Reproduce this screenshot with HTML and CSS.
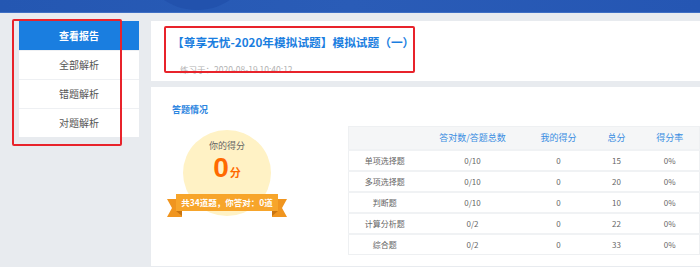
FILE: index.html
```html
<!DOCTYPE html>
<html lang="zh-CN">
<head>
<meta charset="utf-8">
<title>答题报告</title>
<link rel="stylesheet" href="styles.css">
</head>
<body>
<div class="banner"><div class="banner-deco"></div></div>
<div class="main">
  <nav class="side">
    <div class="side-item active">查看报告</div>
    <div class="side-item">全部解析</div>
    <div class="side-item">错题解析</div>
    <div class="side-item">对题解析</div>
  </nav>
  <div class="content">
    <section class="title-card">
      <h1 class="title">【尊享无忧-2020年模拟试题】模拟试题（一）</h1>
      <div class="subtitle">练习于：2020-08-19 10:40:12</div>
    </section>
    <section class="report-card">
      <h2 class="section-title">答题情况</h2>
      <div class="report-body">
        <div class="score-area">
          <div class="score-circle">
            <div class="score-label">你的得分</div>
            <div class="score-value"><span class="score-num">0</span><span class="score-unit">分</span></div>
          </div>
          <div class="ribbon">
            <svg class="ribbon-svg" width="120" height="24" viewBox="0 0 120 24">
              <polygon points="0,5 15,5 15,23 0,23 5,14" fill="#f0951f"/>
              <polygon points="120,5 105,5 105,23 120,23 115,14" fill="#f0951f"/>
              <polygon points="9,17 15,17 15,22" fill="#c87410"/>
              <polygon points="111,17 105,17 105,22" fill="#c87410"/>
              <rect x="9" y="0" width="102" height="17" fill="#f7a52b"/>
            </svg>
            <span class="ribbon-text">共34道题，你答对：0道</span>
          </div>
        </div>
        <table class="score-table">
          <colgroup>
            <col class="c1"><col class="c2"><col class="c3"><col class="c4"><col class="c5">
          </colgroup>
          <thead>
            <tr><th></th><th>答对数/答题总数</th><th>我的得分</th><th>总分</th><th>得分率</th></tr>
          </thead>
          <tbody>
            <tr><td>单项选择题</td><td>0/10</td><td>0</td><td>15</td><td>0%</td></tr>
            <tr><td>多项选择题</td><td>0/10</td><td>0</td><td>20</td><td>0%</td></tr>
            <tr><td>判断题</td><td>0/10</td><td>0</td><td>10</td><td>0%</td></tr>
            <tr><td>计算分析题</td><td>0/2</td><td>0</td><td>22</td><td>0%</td></tr>
            <tr><td>综合题</td><td>0/2</td><td>0</td><td>33</td><td>0%</td></tr>
          </tbody>
        </table>
      </div>
    </section>
  </div>
</div>
<div class="mark mark-side"></div>
<div class="mark mark-title"></div>
</body>
</html>
```

FILE: styles.css
```css
* { box-sizing: border-box; }
html, body { margin: 0; padding: 0; }
body {
  width: 700px;
  height: 267px;
  overflow: hidden;
  background: #e8ebef;
  font-family: "Noto Sans CJK SC", "Noto Sans", "Liberation Sans", sans-serif;
  position: relative;
}
.banner {
  height: 13px;
  background: linear-gradient(90deg, #2457b2 0%, #2a5cb7 50%, #2556b3 100%);
  border-bottom: 1px solid #3f6fc4;
  position: relative;
  overflow: hidden;
}
.banner-deco {
  position: absolute;
  left: 142px;
  top: -90px;
  width: 110px;
  height: 100px;
  border-radius: 50%;
  background: #2252ad;
}
.main {
  display: flex;
  padding: 8px 0 0 19px;
  gap: 12px;
}
.side {
  width: 121px;
  background: #fff;
  align-self: flex-start;
  display: flex;
  flex-direction: column;
}
.side-item {
  height: 29px;
  line-height: 28px;
  text-align: center;
  font-size: 10px;
  color: #555;
  border-top: 1px solid #eef0f3;
}
.side-item.active {
  border-top: 0;
  line-height: 29px;
  background: #1a7ee0;
  color: #fff;
  font-weight: bold;
}
.content {
  flex: 1;
  display: flex;
  flex-direction: column;
  gap: 6px;
}
.title-card {
  height: 60px;
  background: #fff;
  padding: 13px 0 0 21px;
  position: relative;
}
.title-card::before {
  content: "";
  position: absolute;
  left: 13px;
  top: 14px;
  width: 2px;
  height: 10px;
  background: #1a7ee0;
}
.title {
  margin: 0;
  font-size: 11.7px;
  line-height: 16px;
  font-weight: bold;
  color: #1a7ee0;
}
.subtitle {
  margin-top: 13px;
  padding-left: 8px;
  font-size: 8.5px;
  line-height: 12px;
  color: #b3b3b3;
}
.report-card {
  height: 179px;
  background: #fff;
  padding: 16px 0 0 21px;
}
.section-title {
  margin: 0;
  font-size: 9px;
  line-height: 14px;
  font-weight: bold;
  color: #2a84e0;
}
.report-body {
  display: flex;
  margin-top: 9px;
  align-items: flex-start;
}
.score-area {
  width: 176px;
  padding: 4px 0 0 11px;
  position: relative;
}
.score-circle {
  width: 88px;
  height: 86px;
  border-radius: 50%;
  background: #fff2c5;
  text-align: center;
  padding-top: 10px;
}
.score-label {
  font-size: 9px;
  line-height: 12px;
  color: #666;
}
.score-value {
  line-height: 30px;
  margin-top: 1px;
  color: #ff6a00;
  font-weight: bold;
}
.score-num {
  font-size: 28px;
  font-family: "Liberation Sans", Arial, sans-serif;
}
.score-unit {
  font-size: 11px;
  margin-left: 1px;
}
.ribbon {
  position: absolute;
  left: -5px;
  top: 68px;
  width: 120px;
  height: 24px;
}
.ribbon-svg { display: block; }
.ribbon-text {
  position: absolute;
  left: 9px;
  top: 0;
  width: 102px;
  height: 17px;
  line-height: 17px;
  text-align: center;
  color: #fff;
  font-size: 8.5px;
  font-weight: bold;
  white-space: nowrap;
}
.score-table {
  border-collapse: collapse;
  width: 351px;
  table-layout: fixed;
  border: 1px solid #eef0f2;
}
.c1 { width: 72px; }
.c2 { width: 104px; }
.c3 { width: 68px; }
.c4 { width: 48px; }
.c5 { width: 59px; }
.score-table th {
  height: 23px;
  background: #f5f6f7;
  font-size: 9px;
  font-weight: normal;
  color: #3b8ee2;
  text-align: center;
  padding: 0;
}
.score-table td {
  height: 21px;
  border-top: 2px solid #f0f2f4;
  font-size: 8px;
  color: #666;
  text-align: center;
  padding: 0;
}
.mark {
  position: absolute;
  border: 2px solid #e8232b;
  border-radius: 2px;
  pointer-events: none;
}
.mark-side { left: 12px; top: 19px; width: 110px; height: 127px; }
.mark-title { left: 164px; top: 26px; width: 251px; height: 47px; }
```
